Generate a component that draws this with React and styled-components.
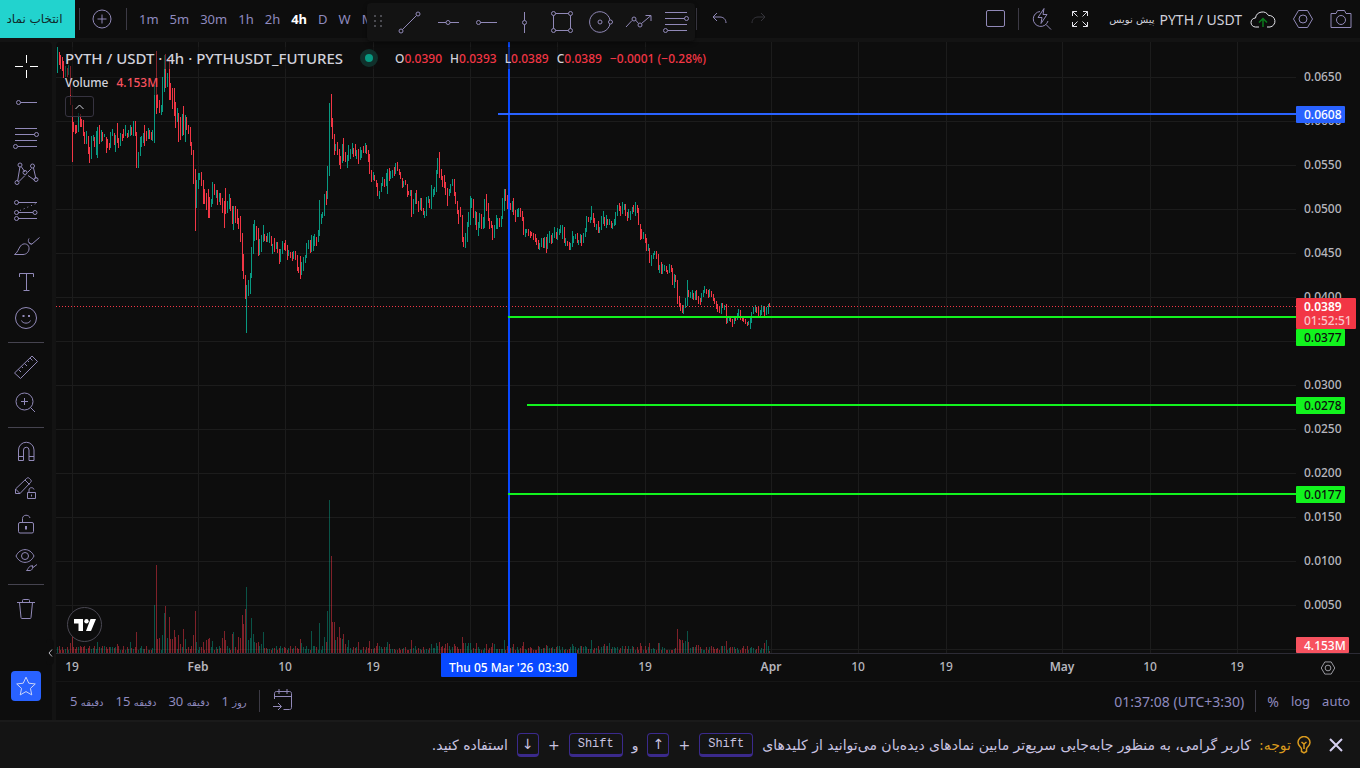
import React, { useEffect } from 'react';
import styled, { createGlobalStyle, css } from 'styled-components';

const UP = '#089981';
const DOWN = '#f23645';

const GlobalStyle = createGlobalStyle`
    * { box-sizing: border-box; }
    body {
        margin: 0;
        background: #131313;
        color: #d1d1db;
        font-family: 'Noto Sans', 'DejaVu Sans', sans-serif;
        font-size: 13px;
    }
    button {
        margin: 0;
        padding: 0;
        border: 0;
        background: none;
        color: inherit;
        font: inherit;
        cursor: pointer;
    }
`;

// x, high, low, direction
const CANDLES = `57 47 73 g,59 52 65 r,60 55 69 r,62 57 71 r,63 61 78 r,65 66 77 g,67 68 77 r,68 65 75 g,70 66 105 r,72 105 162 r,
73 122 132 r,75 125 134 r,76 125 133 r,78 113 132 g,80 114 127 r,81 119 127 r,83 120 136 r,84 132 144 r,86 131 144 g,88 136 154 r,
89 147 163 r,91 136 159 g,93 135 141 g,94 137 147 r,96 131 155 g,97 127 158 g,99 125 144 r,101 130 142 g,102 132 141 r,104 134 137 g,
106 137 153 r,107 139 148 r,109 143 150 r,110 132 148 g,112 129 136 g,114 133 145 r,115 135 152 g,117 123 143 r,118 138 148 r,
120 133 146 g,122 134 141 r,123 129 138 r,125 125 136 g,127 133 138 r,128 130 137 g,130 125 136 g,131 127 135 r,133 121 136 g,
135 121 136 r,136 132 168 r,138 152 168 g,140 137 156 g,141 136 147 g,143 133 143 g,144 125 146 r,146 131 141 r,148 128 139 g,
149 130 139 r,151 132 140 r,152 130 141 g,154 85 143 g,156 51 114 r,157 94 108 r,159 100 113 r,161 105 115 g,162 77 112 g,164 55 92 g,
165 54 88 r,167 73 87 g,169 58 100 r,170 83 100 r,172 88 109 r,174 88 116 r,175 102 128 r,177 108 122 g,178 113 142 r,180 117 140 r,
182 114 136 g,183 106 135 r,185 115 142 g,186 117 130 r,188 125 134 r,190 127 146 r,191 142 155 r,193 150 184 r,195 169 231 r,
196 180 208 g,198 173 189 g,199 173 180 g,201 172 186 r,203 180 204 r,204 189 204 r,206 193 210 r,208 189 218 r,209 197 218 r,
211 199 207 g,212 182 204 g,214 184 195 r,216 190 198 g,217 190 205 r,219 193 202 g,220 193 205 r,222 198 213 r,224 201 228 r,
225 188 214 r,227 201 213 g,229 194 209 g,230 198 211 r,232 206 224 r,233 206 230 g,235 206 223 r,237 209 224 r,238 218 229 r,
240 216 242 r,242 233 271 r,243 254 279 r,245 275 299 r,246 285 333 g,248 280 296 g,250 273 294 g,251 247 278 g,253 224 254 g,
254 220 241 g,256 226 240 r,258 228 256 r,259 239 255 g,261 235 252 g,263 225 242 g,264 234 241 r,266 236 242 r,267 233 242 g,
269 232 243 g,271 236 246 r,272 244 254 g,274 238 252 r,276 242 249 g,277 242 253 r,279 249 264 r,280 249 262 g,282 241 254 g,
284 243 250 r,285 240 251 r,287 245 260 r,288 250 256 g,290 252 258 r,292 252 261 r,293 251 259 g,295 251 260 r,297 255 271 r,
298 267 273 r,300 256 279 r,301 262 275 g,303 257 271 g,305 255 263 g,306 243 258 g,308 240 249 g,310 240 253 r,311 235 252 g,
313 236 251 g,314 234 246 g,316 237 246 r,318 230 242 g,319 200 236 g,321 214 224 g,322 212 218 g,324 194 216 g,326 191 205 r,
327 166 199 g,329 103 176 g,331 94 127 r,332 118 139 r,334 134 155 r,335 144 151 g,337 142 155 r,339 149 165 r,340 156 169 r,
342 144 163 g,343 138 161 r,345 152 162 r,347 155 168 g,348 145 161 g,350 149 159 g,352 143 154 g,353 148 157 r,355 144 156 r,
356 150 159 g,358 149 164 r,360 147 160 g,361 150 158 g,363 146 153 r,365 143 153 g,366 145 154 r,368 150 162 r,369 154 174 r,
371 170 182 r,373 172 180 g,374 175 181 r,376 180 187 r,377 183 196 r,379 191 199 g,381 183 192 g,382 177 186 g,384 179 187 r,
386 173 186 g,387 169 194 g,389 168 181 r,390 171 179 g,392 170 178 g,394 167 176 r,395 163 174 g,397 162 171 r,399 169 175 r,
400 172 179 r,402 178 188 r,403 181 187 g,405 180 185 r,407 184 197 r,408 191 195 r,410 190 196 g,411 190 217 r,413 199 214 g,
415 193 204 g,416 190 204 r,418 201 212 r,420 198 210 g,421 198 211 r,423 208 215 r,424 211 218 g,426 197 216 g,428 196 203 g,
429 199 208 r,431 185 209 g,433 189 197 g,434 187 195 g,436 170 192 g,437 158 174 g,439 152 178 r,441 169 180 r,442 176 187 r,
444 175 188 r,445 182 195 r,447 188 206 r,449 189 196 g,450 184 193 g,452 179 186 g,454 179 196 r,455 192 204 r,457 201 214 r,
458 210 224 r,460 207 217 r,462 215 242 r,463 237 247 r,465 233 248 g,467 222 242 g,468 212 227 g,470 196 225 g,471 198 208 g,
473 199 218 r,475 211 225 g,476 212 230 r,478 222 236 g,479 213 228 g,481 214 229 r,483 217 229 g,484 199 228 g,486 194 211 r,
488 203 221 r,489 218 229 r,491 221 228 r,492 225 240 r,494 225 238 g,496 215 229 g,497 218 229 g,499 218 227 r,501 216 227 g,
502 198 219 g,504 189 211 g,505 189 201 r,507 195 209 r,510 203 210 r,512 201 212 g,513 198 215 r,515 210 222 r,517 209 217 g,
518 208 217 g,520 208 217 r,522 211 221 r,523 217 235 r,525 229 237 g,526 229 233 g,528 229 236 r,530 231 238 r,531 232 236 r,
533 233 240 r,535 234 242 r,536 238 245 r,538 240 249 r,539 243 250 g,541 238 247 g,543 238 248 r,544 237 248 g,546 237 253 r,
547 234 249 g,549 231 243 g,551 235 244 r,552 233 243 g,554 227 238 g,556 232 239 r,557 228 240 g,559 229 235 g,560 225 233 g,
562 225 239 g,564 227 243 r,565 238 246 g,567 241 246 r,569 242 250 r,570 243 250 g,572 231 247 g,573 236 243 g,575 234 239 g,
577 233 243 r,578 240 245 g,580 234 243 g,581 235 246 r,583 233 243 g,585 228 237 g,586 216 232 g,588 217 222 r,590 217 223 g,
591 206 220 g,593 213 223 r,594 218 227 r,596 224 230 g,598 221 233 r,599 227 233 g,601 216 230 g,603 211 224 g,604 217 226 r,
606 215 228 g,607 219 225 r,609 219 225 g,611 221 228 r,612 223 229 g,614 219 226 g,615 212 225 g,617 205 216 g,619 203 211 r,
620 206 216 r,622 202 214 g,624 204 210 g,625 204 216 r,627 212 221 r,628 209 218 g,630 211 220 g,632 207 214 g,633 205 212 r,
635 202 216 g,637 205 213 r,638 208 225 r,640 224 240 r,641 229 239 r,643 232 239 g,645 234 243 r,646 238 251 r,648 244 251 g,
649 248 263 r,651 255 266 g,653 253 259 g,654 251 255 g,656 251 259 r,658 254 270 r,659 265 273 g,661 262 274 r,662 264 274 g,
664 265 271 g,666 266 272 r,667 270 274 r,669 264 273 g,671 265 272 r,672 268 285 r,674 274 288 g,675 275 282 r,677 280 304 r,
679 296 307 r,680 303 311 r,682 305 313 r,683 305 314 g,685 298 308 g,687 280 306 g,688 290 297 r,690 292 298 g,692 290 299 g,
693 293 300 r,695 291 300 g,696 290 300 r,698 296 304 r,700 298 305 r,701 293 302 g,703 290 297 g,704 286 293 g,706 289 294 r,
708 290 298 r,709 289 297 g,711 291 297 r,713 294 301 r,714 298 304 r,716 301 309 r,717 304 312 r,719 306 313 r,721 303 314 g,
722 303 308 r,724 305 310 g,726 304 324 r,727 317 323 g,729 316 321 g,730 316 322 r,732 319 327 r,734 318 324 g,735 317 321 r,
737 313 320 g,738 309 317 g,740 310 320 r,742 317 321 r,743 318 322 r,745 319 324 r,747 322 326 r,748 321 325 g,750 317 329 g,
751 312 323 g,753 307 314 g,755 305 312 g,756 307 313 r,758 306 318 r,760 310 317 g,761 305 315 g,763 306 312 g,764 306 316 r,
766 307 315 g,768 304 314 g,769 303 307 r`.split(',').map((row) => {
    const [x, high, low, dir] = row.trim().split(' ');
    return { x: Number(x), high: Number(high), low: Number(low), up: dir === 'g' };
});

// bars that stand out of the usual volume
const VOLUME_PEAKS = {
    70: 10, 72: 17, 97: 11, 117: 9, 130: 11, 136: 21, 154: 48, 156: 88, 157: 14, 159: 15, 162: 18, 164: 40, 165: 47,
    167: 15, 169: 36, 170: 14, 172: 14, 174: 23, 175: 16, 178: 18, 180: 9, 183: 24, 185: 14, 193: 18, 195: 42, 196: 11,
    203: 11, 206: 13, 208: 14, 209: 15, 212: 12, 222: 15, 224: 22, 225: 13, 232: 19, 233: 21, 238: 16, 240: 15, 242: 38,
    243: 29, 245: 44, 246: 66, 248: 13, 250: 15, 251: 35, 253: 19, 254: 11, 256: 10, 258: 11, 261: 9, 263: 21, 300: 14,
    301: 10, 311: 22, 319: 30, 324: 16, 326: 11, 327: 42, 329: 153, 331: 97, 332: 31, 334: 31, 335: 13, 337: 16, 339: 26,
    340: 15, 342: 14, 343: 19, 345: 9, 348: 13, 358: 11, 369: 12, 377: 10, 387: 11, 389: 9, 411: 13, 431: 9, 436: 10,
    439: 11, 445: 9, 447: 10, 454: 9, 462: 16, 463: 10, 465: 10, 468: 10, 470: 10, 476: 10, 486: 9, 492: 10, 494: 9,
    504: 13, 513: 9, 523: 11, 546: 8, 572: 9, 591: 13, 604: 9, 609: 10, 636: 8, 640: 10, 649: 10, 658: 10, 659: 10,
    677: 24, 679: 14, 680: 13, 682: 13, 683: 10, 685: 12, 687: 22, 688: 11, 696: 8, 698: 8, 726: 12, 764: 10, 766: 13,
    768: 7, 769: 2,
};

const volumeAt = (x) => VOLUME_PEAKS[x] || 3 + Math.floor(Math.abs(Math.sin(x * 12.9) * 437) % 1 * 5);

const PLOT_LEFT = 56;
const PLOT_TOP = 42;

const candlePath = (up) => CANDLES
    .filter((c) => c.up === up)
    .map((c) => `M${c.x - PLOT_LEFT} ${c.high - PLOT_TOP}h1V${c.low - PLOT_TOP}h-1z`)
    .join('');

const volumePath = (up) => CANDLES
    .filter((c) => c.up === up)
    .map((c) => `M${c.x - PLOT_LEFT} 0h1v${-volumeAt(c.x)}h-1z`)
    .join('');

const PRICES = ['0.0650', '0.0600', '0.0550', '0.0500', '0.0450', '0.0400', '0.0350', '0.0300', '0.0250', '0.0200', '0.0150', '0.0100', '0.0050', ''];
const DATES = [
    [16, '19'], [142, 'Feb'], [229, '10'], [317, '19'], [414, ''], [501, ''], [589, '19'], [715, 'Apr'],
    [802, '10'], [890, '19'], [1006, 'May'], [1094, '10'], [1181, '19'],
];
const priceY = (i) => 35 + i * 44;

const Page = styled.div`
    min-height: 100vh;
    display: flex;
    flex-direction: column;
    overflow: hidden;
`;

const TopBar = styled.header`
    position: relative;
    display: flex;
    align-items: center;
    height: 38px;
    margin-bottom: 4px;
    background: #0d0d0d;
    color: #8f8abf;
`;

const SymbolButton = styled.button`
    width: 75px;
    height: 38px;
    padding-right: 6px;
    background: #22d3ce;
    color: #10282a;
    font-family: 'DejaVu Sans', sans-serif;
    font-size: 12px;
    white-space: nowrap;
`;

const Divider = styled.span`
    width: 1px;
    height: 22px;
    margin: 0 ${(p) => p.$gap || 0}px;
    background: #3c3a45;
`;

const IconButton = styled.button`
    display: flex;
    align-items: center;
    justify-content: center;
    flex: none;
    width: ${(p) => p.$w || 38}px;
    height: ${(p) => p.$h || 38}px;
    color: ${(p) => p.$color || '#9189b8'};
`;

const Intervals = styled.nav`
    display: flex;
    width: 240px;
    overflow: hidden;
`;

const Interval = styled.button`
    flex: none;
    padding: 0 5px 0 6px;
    font-size: 13px;
    ${(p) => p.$active && css`
        color: #fff;
        font-weight: 700;
    `}
`;

const Spacer = styled.span`
    flex: 1;
`;

const History = styled.div`
    display: flex;
    align-items: center;
    margin-left: 319px;
`;

const LayoutName = styled.button`
    display: flex;
    align-items: center;
    gap: 5px;
    padding-left: 10px;
    color: #d1d1db;
    font-size: 14px;
    white-space: nowrap;
`;

const Persian = styled.span`
    font-family: 'DejaVu Sans', sans-serif;
    font-size: 10px;
`;

const Favorites = styled.div`
    position: absolute;
    z-index: 2;
    left: 367px;
    top: 3px;
    display: flex;
    height: 38px;
    border-radius: 4px;
    background: #131313;
    box-shadow: 0 2px 4px rgba(0, 0, 0, 0.4);
`;

const Body = styled.main`
    flex: 1;
    display: flex;
    gap: 4px;
`;

const Tools = styled.aside`
    position: relative;
    display: flex;
    flex-direction: column;
    align-items: center;
    width: 52px;
    padding: 6px 0 19px;
    border-radius: 0 4px 0 0;
    background: #0d0d0d;
`;

const ToolRule = styled.hr`
    width: 36px;
    height: 1px;
    margin: 6px 0;
    border: 0;
    background: #45434f;
`;

const StarButton = styled.button`
    display: flex;
    align-items: center;
    justify-content: center;
    width: 30px;
    height: 30px;
    margin-top: auto;
    border-radius: 4px;
    background: #2962ff;
    color: #d6dcf5;
`;

const Collapse = styled.button`
    position: absolute;
    right: -2px;
    bottom: 55px;
    width: 8px;
    height: 26px;
    border-radius: 4px;
    background: #0d0d0d;
    color: #b8b8c0;
`;

const ChartArea = styled.section`
    flex: 1;
    min-width: 0;
    display: flex;
    flex-direction: column;
    border-radius: 4px 0 0 0;
    background: #0d0d0d;
`;

const ChartGrid = styled.div`
    flex: 1;
    display: grid;
    grid-template-columns: minmax(0, 1fr) 64px;
    grid-template-rows: minmax(611px, 1fr) 28px;
`;

const Pane = styled.div`
    position: relative;
    display: flex;
`;

const Canvas = styled.svg`
    display: block;
    width: 100%;
    height: 100%;
    font-size: 12px;
    font-weight: 500;
`;

const Legend = styled.div`
    position: absolute;
    left: 8px;
    top: 5px;
    display: flex;
    flex-direction: column;
    align-items: flex-start;
`;

const LegendRow = styled.div`
    display: flex;
    align-items: center;
    height: ${(p) => (p.$main ? 22 : 26)}px;
    padding: 0 1px;
    background: rgba(13, 13, 13, 0.5);
    white-space: nowrap;
    font-size: 12px;
    font-weight: 500;
`;

const Title = styled.h1`
    margin: 0;
    font-size: 15px;
    font-weight: 500;
    line-height: 22px;
`;

const Status = styled.span`
    width: 18px;
    height: 18px;
    margin: 0 17px;
    border: 5px solid #10302b;
    border-radius: 50%;
    background: ${UP};
`;

const Quote = styled.span`
    margin-right: 8px;
    color: ${DOWN};

    b {
        color: #d1d1db;
        font-weight: 500;
    }
`;

const VolumeValue = styled.span`
    margin-left: 8px;
    color: #f7525f;
`;

const LegendToggle = styled.button`
    display: flex;
    align-items: center;
    justify-content: center;
    width: 29px;
    height: 21px;
    margin: 1px;
    border: 1px solid #363340;
    border-radius: 3px;
    background: rgba(13, 13, 13, 0.7);
`;

const Brand = styled.a`
    position: absolute;
    left: 11px;
    bottom: 11px;
    display: flex;
    align-items: center;
    justify-content: center;
    width: 35px;
    height: 35px;
    border: 1px solid #4a4853;
    border-radius: 50%;
    background: #0d0d0d;
    color: #fff;
`;

const AxisSettings = styled.button`
    display: flex;
    align-items: center;
    justify-content: center;
    border-top: 1px solid #2c2b35;
    color: #d1d1db;
`;

const RangeBar = styled.div`
    display: flex;
    align-items: center;
    height: 39px;
    padding: 0 10px 0 14px;
    border-top: 1px solid #161616;
    color: #8f8abf;
    font-size: 14px;
`;

const RangeButton = styled.button`
    margin-right: 12px;
    font-size: 13px;
    white-space: nowrap;
`;

const ScaleButton = styled.button`
    margin-left: 12px;
    font-size: 13px;
`;

const Notice = styled.footer`
    display: flex;
    align-items: center;
    height: 48px;
    padding: 0 14px;
    border-top: 2px solid #1a1a1a;
    background: #141414;
    color: #c9c3e0;
    font-family: 'DejaVu Sans', sans-serif;
    font-size: 14px;
    white-space: nowrap;
`;

const NoticeText = styled.p`
    display: flex;
    align-items: center;
    gap: 9px;
    margin: 0;
`;

const Warning = styled.strong`
    display: flex;
    align-items: center;
    gap: 6px;
    margin-right: 15px;
    margin-left: 8px;
    color: #d99a1e;
    font-weight: 400;
`;

const Key = styled.kbd`
    display: inline-flex;
    align-items: center;
    justify-content: center;
    height: 24px;
    min-width: 22px;
    padding: 0 ${(p) => (p.$wide ? 8 : 2)}px;
    border: 1px solid #3b2a8c;
    border-bottom-width: 3px;
    border-radius: 4px;
    font-family: ${(p) => (p.$wide ? "'Liberation Mono', monospace" : "'DejaVu Sans', sans-serif")};
    font-size: ${(p) => (p.$wide ? 12 : 14)}px;
`;

const Icon = ({ size = 28, children }) => (
    <svg width={size} height={size} viewBox="0 0 28 28" fill="none" stroke="currentColor" aria-hidden="true">
        {children}
    </svg>
);

const Dot = ({ x, y }) => <circle cx={x} cy={y} r="2" />;

const RayIcon = () => (
    <Icon><Dot x="6.5" y="14.5" /><path d="M8.5 14.5H25" /></Icon>
);

const FibIcon = () => (
    <Icon>
        <path d="M3 4.500h22M3 10.500h19.500M3 16.500h22M6 22.500h19" />
        <Dot x="24.500" y="10.500" /><Dot x="3.500" y="22.500" />
    </Icon>
);

const HexIcon = ({ size }) => (
    <Icon size={size}>
        <path d="M9.500 5.500h9l5 8.500-5 8.500h-9l-5-8.500z" /><circle cx="14" cy="14" r="4" />
    </Icon>
);

const favoriteTools = [
    ['Trend line', <Icon><path d="M6.500 21.500l14-14" /><Dot x="5" y="23" /><Dot x="22" y="6" /></Icon>],
    ['Horizontal line', <Icon><path d="M4 14.500h8M16 14.500h9" /><Dot x="14" y="14.500" /></Icon>],
    ['Horizontal ray', <RayIcon />],
    ['Vertical line', <Icon><path d="M14.500 4v8.500M14.500 16.500V25" /><Dot x="14.500" y="14.500" /></Icon>],
    ['Rectangle', (
        <Icon>
            <path d="M7.500 5.500h13M7.500 22.500h13M5.500 7.500v13M22.500 7.500v13" />
            <Dot x="5.500" y="5.500" /><Dot x="22.500" y="5.500" /><Dot x="5.500" y="22.500" /><Dot x="22.500" y="22.500" />
        </Icon>
    )],
    ['Circle', (
        <Icon>
            <path d="M24 12a10.300 10.300 0 1 0 0 4" /><Dot x="14" y="14" /><Dot x="24.500" y="14" />
        </Icon>
    )],
    ['Path', (
        <Icon>
            <path d="M2 19l6-6.500M11.500 12l3 3.500M17.500 15.500L27 7.500M21.500 7.500H27V13" />
            <Dot x="10" y="11" /><Dot x="16" y="17" />
        </Icon>
    )],
    ['Fib retracement', <FibIcon />],
];

const drawingTools = [
    ['Cross', <Icon><path d="M14.500 3v8M14.500 18v8M3 14.500h8M18 14.500h8" /></Icon>, '#fff'],
    ['Horizontal ray', <RayIcon />],
    ['Fib retracement', <FibIcon />],
    ['Pattern', (
        <Icon>
            <path d="M5.500 21.500l2.500-15M9.500 7l3.500 5M7 21.500l6-6M15.500 12.500l4-4M16 15.500l7 5M21.500 8l2.500 11" />
            <Dot x="8" y="5" /><Dot x="20.500" y="6" /><Dot x="13" y="12.500" /><Dot x="5" y="22.500" /><Dot x="24" y="19.500" />
        </Icon>
    )],
    ['Forecast', (
        <Icon>
            <path d="M6 6.500h19M6 16.500h15M6 22.500h19" />
            <path d="M8 14.500l16-7" strokeDasharray="1 3" />
            <Dot x="4.500" y="6.500" /><Dot x="4.500" y="16.500" /><Dot x="23" y="16.500" /><Dot x="4.500" y="22.500" />
        </Icon>
    )],
    ['Brush', (
        <Icon>
            <path d="M2.500 22.500c3-1.500 4-6 6-8.500 2.500-3.500 8-2.500 8.500 1.500s-2.500 7-6 7z" />
            <path d="M17 6.500c-1.500 2.500-.500 5.500 3 5.500L27.500 5.500M19.500 12.500l-2.500-2" />
        </Icon>
    )],
    ['Text', <Icon><path d="M7.500 9V5.500h14V9M14.500 5.500v17M11.500 22.500h6" /></Icon>],
    ['Emoji', (
        <Icon>
            <circle cx="14" cy="14" r="10.500" /><path d="M9.500 16.500c1 3.500 8 3.500 9 0" />
            <path d="M11.500 11v2M17 11v2" strokeWidth="2" />
        </Icon>
    )],
    null,
    ['Measure', (
        <Icon>
            <path d="M2.500 20L20 3l5.500 5.500L8.500 25.500zM6.500 16.500l2.500 2.500M9.500 13.500l1.500 1.500M12.500 10.500l2.500 2.500M15.500 7.500l1.500 1.500M18 5l2.500 2.500" />
        </Icon>
    )],
    ['Zoom in', (
        <Icon><circle cx="12.500" cy="12.500" r="8.500" /><path d="M18.500 18.500l4.500 4.500M9 12.500h7M12.500 9v7" /></Icon>
    )],
    null,
    ['Magnet', (
        <Icon>
            <path d="M6.500 22.500V12a7.700 7.700 0 0 1 15.500 0v10.500h-5V12a2.700 2.700 0 0 0-5.500 0v10.500zM6.500 18.500h5M17 18.500h5" />
        </Icon>
    )],
    ['Stay in drawing mode', (
        <Icon>
            <path d="M3.500 19.500v-4.500L14.500 4.500c1-1 2-1 3 0l1 1c1 1 1 2 0 3L8 19.500zM3.500 15l4.500 4.500M13 6l4.500 4.500" />
            <path d="M15.500 18.500h8v6h-8zM17 18.500v-2.500c0-3 4.500-3 5-.500M19.500 20.500v2" />
        </Icon>
    )],
    ['Lock drawings', (
        <Icon>
            <rect x="6.500" y="12.500" width="15" height="10.500" rx="1.500" />
            <path d="M10.500 12.500V8.500c0-4 6.500-4.500 7.500-.500" /><path d="M14 16v3.500" strokeWidth="2" />
        </Icon>
    )],
    ['Hide drawings', (
        <Icon>
            <path d="M4 10c4-8.500 14-8.500 18 0-4 8.500-14 8.500-18 0z" /><circle cx="13" cy="10" r="3.500" />
            <path d="M14.500 24.500c1.500-1 2.500-5 5-4.500 2 .500 1 4.500-1.500 4.500zM20 19l1 2.500 4-3" />
        </Icon>
    )],
    null,
    ['Remove', (
        <Icon>
            <path d="M5 7.500h18M10.500 7.500v-2c0-1 .500-1 1-1h5c.500 0 1 0 1 1v2M7.500 7.500L9 22.500c0 1 .500 1 1 1h8c.500 0 1 0 1-1l1.500-15" />
        </Icon>
    )],
];

const intervals = ['1m', '5m', '30m', '1h', '2h', '4h', 'D', 'W', 'M'];
const quotes = [['O', '0.0390'], ['H', '0.0393'], ['L', '0.0389'], ['C', '0.0389']];
const ranges = [['5', 'دقیقه'], ['15', 'دقیقه'], ['30', 'دقیقه'], ['1', 'روز']];

const Toolbar = () => (
    <TopBar>
        <SymbolButton>انتخاب نماد</SymbolButton>
        <Divider $gap={4} />
        <IconButton aria-label="Compare" $w={36}>
            <Icon><circle cx="14" cy="14" r="9" /><path d="M9.500 14h9M14 9.500v9" /></Icon>
        </IconButton>
        <Divider $gap={6} />
        <Intervals>
            {intervals.map((name) => <Interval key={name} $active={name === '4h'}>{name}</Interval>)}
        </Intervals>
        <Favorites>
            <IconButton aria-label="Move toolbar" $w={24} $color="#4a4a50">
                <svg width="10" height="14" fill="currentColor">
                    {[0, 5, 10].map((y) => <path key={y} d={`M0 ${y}h2v2h-2zM6 ${y}h2v2h-2z`} />)}
                </svg>
            </IconButton>
            {favoriteTools.map(([name, icon]) => <IconButton key={name} aria-label={name}>{icon}</IconButton>)}
        </Favorites>
        <History>
            <Divider $gap={4} />
            <IconButton aria-label="Undo">
                <Icon><path d="M11 8l-4 4 4 4M7 12h7c3 0 6 2 6 6" /></Icon>
            </IconButton>
            <IconButton aria-label="Redo" $color="#35343b">
                <Icon><path d="M17 8l4 4-4 4M21 12h-7c-3 0-6 2-6 6" /></Icon>
            </IconButton>
        </History>
        <Spacer />
        <IconButton aria-label="Layout">
            <Icon><rect x="5.500" y="5.500" width="18" height="16" rx="1.500" /></Icon>
        </IconButton>
        <Divider $gap={4} />
        <IconButton aria-label="Quick search">
            <Icon>
                <path d="M12 6.500a7.500 7.500 0 1 0 8 9.500M18 19.500l5 5M16 3.500l-6 9h4l-1 6 6-9h-4z" />
            </Icon>
        </IconButton>
        <IconButton aria-label="Fullscreen" $color="#e3e3ea">
            <Icon>
                <path d="M6.500 11V6.500H11M6.500 6.500l5 5M17 6.500h4.500V11M21.500 6.500l-5 5M6.500 17v4.500H11M6.500 21.500l5-5M21.500 17v4.500H17M21.500 21.500l-5-5" />
            </Icon>
        </IconButton>
        <LayoutName>
            <Persian>پیش نویس</Persian>
            <span>PYTH / USDT</span>
        </LayoutName>
        <IconButton aria-label="Save" $color="#e3e3ea" $w={42}>
            <Icon>
                <path d="M10 22H6.500a4.500 4.500 0 0 1 0-9 7 7 0 0 1 13-2.500 5.800 5.800 0 0 1 1.500 11.500h-3" />
                <path d="M14 22v-8M10 17.500l4-4 4 4" stroke="#0b7a1c" strokeWidth="1.500" />
            </Icon>
        </IconButton>
        <IconButton aria-label="Settings"><HexIcon /></IconButton>
        <IconButton aria-label="Snapshot">
            <Icon>
                <path d="M4 8.500h5l1.500-3h7l1.500 3h5v14H4z" strokeLinejoin="round" /><circle cx="14" cy="15" r="4.500" />
            </Icon>
        </IconButton>
    </TopBar>
);

const Plot = () => (
    <Canvas>
        <g fill="#1c1c1c">
            {DATES.map(([x]) => <rect key={x} x={x} width="1" height="100%" />)}
            {PRICES.map((p, i) => <rect key={i} y={priceY(i)} width="100%" height="1" />)}
        </g>
        <svg y="100%" overflow="visible">
            <path d={volumePath(true)} fill={UP} opacity="0.5" />
            <path d={volumePath(false)} fill={DOWN} opacity="0.5" />
        </svg>
        <path d={candlePath(true)} fill={UP} />
        <path d={candlePath(false)} fill={DOWN} />
        <line y1="264.500" y2="264.500" x2="100%" stroke={DOWN} strokeDasharray="1 2" />
        <rect x="452" width="2" height="100%" fill="#0849ff" />
        <rect x="442" y="71" width="100%" height="2" fill="#2962ff" />
        <g fill="#12f31e">
            <rect x="452" y="274" width="100%" height="2" />
            <rect x="471" y="362" width="100%" height="2" />
            <rect x="452" y="451" width="100%" height="2" />
        </g>
    </Canvas>
);

const PriceTag = ({ y, width = 49, height = 17, fill, color = '#fff', weight, children }) => (
    <g>
        <rect y={y} width={width} height={height} rx="1" fill={fill} />
        <text x="8" y={y + 13} fill={color} fontWeight={weight}>{children}</text>
    </g>
);

const PriceAxis = () => (
    <Canvas>
        <g fill="#b6b6bd">
            {PRICES.map((p, i) => i !== 6 && <text key={i} x="8" y={priceY(i) + 4}>{p}</text>)}
        </g>
        <PriceTag y={64} fill="#2962ff">0.0608</PriceTag>
        <PriceTag y={287} fill="#12f31e" color="#0d0d0d">0.0377</PriceTag>
        <PriceTag y={355} fill="#12f31e" color="#0d0d0d">0.0278</PriceTag>
        <PriceTag y={444} fill="#12f31e" color="#0d0d0d">0.0177</PriceTag>
        <PriceTag y={256} width={60} height={31} fill={DOWN} weight={600}>0.0389</PriceTag>
        <text x="8" y="283" fill="#fbc3c7">01:52:51</text>
        <svg y="100%" overflow="visible">
            <PriceTag y={-16} width={53} height={16} fill="#f7525f">4.153M</PriceTag>
        </svg>
    </Canvas>
);

const TimeAxis = () => (
    <Canvas>
        <rect width="100%" height="1" fill="#2c2b35" />
        <g fill="#b6b6bd" textAnchor="middle">
            {DATES.map(([x, label]) => (
                <text key={x} x={x} y="18" fontWeight={/[A-Z]/.test(label) ? 600 : 500}>{label}</text>
            ))}
        </g>
        <rect x="385" width="136" height="24" rx="1" fill="#0849ff" />
        <text x="393" y="19" fill="#fff">Thu 05 Mar '26</text>
        <text x="482" y="19" fill="#fff">03:30</text>
    </Canvas>
);

const ChartLegend = () => (
    <Legend>
        <LegendRow $main>
            <Title>PYTH / USDT · 4h · PYTHUSDT_FUTURES</Title>
            <Status />
            {quotes.map(([name, value]) => <Quote key={name}><b>{name}</b>{value}</Quote>)}
            <Quote>−0.0001 (−0.28%)</Quote>
        </LegendRow>
        <LegendRow>
            Volume <VolumeValue>4.153M</VolumeValue>
        </LegendRow>
        <LegendToggle aria-label="Hide indicators legend">
            <svg width="9" height="6" fill="none" stroke="#d1d1db"><path d="M.500 5l4-4 4 4" /></svg>
        </LegendToggle>
    </Legend>
);

const App = () => {
    useEffect(() => {
        document.title = 'PYTH / USDT';
    });

    return (
        <Page>
            <GlobalStyle />
            <Toolbar />
            <Body>
                <Tools>
                    {drawingTools.map((tool, i) => (tool
                        ? <IconButton key={tool[0]} aria-label={tool[0]} $h={36} $color={tool[2]}>{tool[1]}</IconButton>
                        : <ToolRule key={i} />
                    ))}
                    <StarButton aria-label="Favorites">
                        <Icon size={26}>
                            <path d="M14 4.500l3 6.500 7 .800-5.200 4.800 1.400 7L14 20l-6.200 3.600 1.400-7L4 11.800l7-.800z" />
                        </Icon>
                    </StarButton>
                    <Collapse aria-label="Hide drawing toolbar">
                        <svg width="5" height="8" fill="none" stroke="currentColor"><path d="M4 .500L1 4l3 3.500" /></svg>
                    </Collapse>
                </Tools>
                <ChartArea>
                    <ChartGrid>
                        <Pane>
                            <Plot />
                            <ChartLegend />
                            <Brand href="#tradingview" aria-label="TradingView">
                                <svg width="22" height="12" fill="currentColor">
                                    <path d="M0 0h9v12H4.500V4.500H0z" /><circle cx="12.500" cy="2.200" r="2.200" />
                                    <path d="M16.500 0H22l-5 12h-5z" />
                                </svg>
                            </Brand>
                        </Pane>
                        <PriceAxis />
                        <TimeAxis />
                        <AxisSettings aria-label="Axis settings"><HexIcon size={20} /></AxisSettings>
                    </ChartGrid>
                    <RangeBar>
                        {ranges.map(([count, unit]) => (
                            <RangeButton key={count}>{count} <Persian>{unit}</Persian></RangeButton>
                        ))}
                        <Divider />
                        <IconButton aria-label="Go to date" $w={46}>
                            <Icon>
                                <path d="M5.500 12V6.500c0-1 .500-2 2-2h13c1 0 2 .500 2 2v14c0 1-.500 2-2 2h-6M5.500 9.500h17M10 2v5M18 2v5M4 19.500h8M9 16l3.500 3.500L9 23" />
                            </Icon>
                        </IconButton>
                        <Spacer />
                        <button>01:37:08 (UTC+3:30)</button>
                        <Divider $gap={11} />
                        <button>%</button>
                        <ScaleButton>log</ScaleButton>
                        <ScaleButton>auto</ScaleButton>
                    </RangeBar>
                </ChartArea>
            </Body>
            <Notice dir="rtl">
                <IconButton aria-label="بستن" $w={20} $color="#d5cff0">
                    <svg width="14" height="14" stroke="currentColor" strokeWidth="2"><path d="M1 1l12 12M13 1L1 13" /></svg>
                </IconButton>
                <Warning>
                    <svg width="14" height="18" viewBox="0 0 14 18" fill="none" stroke="currentColor" strokeWidth="1.500">
                        <path d="M4.500 13c0-2-3.500-3-3.500-6.500a6 6 0 0 1 12 0c0 3.500-3.500 4.500-3.500 6.500v2.500l-2.500 1.500-2.500-1.500zM4.500 6L7 8l2.500-2M7 8v5" />
                    </svg>
                    توجه:
                </Warning>
                <NoticeText>
                    <span>کاربر گرامی، به منظور جابه‌جایی سریع‌تر مابین نمادهای دیده‌بان می‌توانید از کلیدهای</span>
                    <Key $wide>Shift</Key>
                    <span>+</span>
                    <Key>↑</Key>
                    <span>و</span>
                    <Key $wide>Shift</Key>
                    <span>+</span>
                    <Key>↓</Key>
                    <span>استفاده کنید.</span>
                </NoticeText>
            </Notice>
        </Page>
    );
};

export default App;
